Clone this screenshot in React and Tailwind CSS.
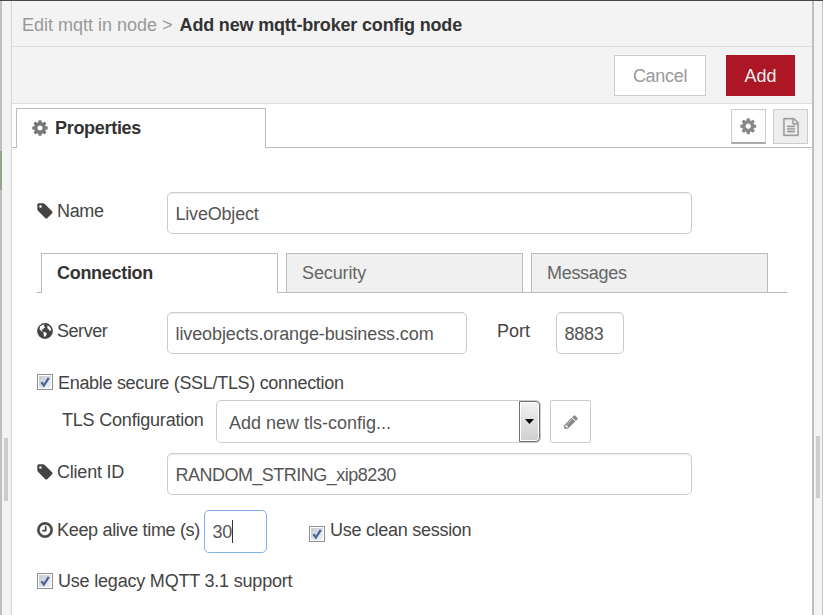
const COG =
  'M1152 896q0-106-75-181t-181-75-181 75-75 181 75 181 181 75 181-75 75-181zm512-109v222q0 12-8 23t-20 13l-185 28q-19 54-39 91 35 50 107 138 10 12 10 25t-9 23q-27 37-99 108t-94 71q-12 0-26-9l-138-108q-44 23-91 38-16 136-29 186-7 28-36 28h-222q-14 0-24.5-8.5t-11.5-21.5l-28-184q-49-16-90-37l-141 107q-10 9-25 9-14 0-25-11-126-114-165-168-7-10-7-23 0-12 8-23 15-21 51-66.5t54-70.5q-27-50-41-99l-183-27q-13-2-21-12.5t-8-23.5v-222q0-12 8-23t19-13l186-28q14-46 39-92-40-57-107-138-10-12-10-24 0-10 9-23 26-36 98.5-107.5t94.5-71.5q13 0 26 10l138 107q44-23 91-38 16-136 29-186 7-28 36-28h222q14 0 24.5 8.5t11.5 21.5l28 184q49 16 90 37l142-107q9-9 24-9 13 0 25 10 129 119 165 170 7 8 7 22 0 12-8 23-15 21-51 66.5t-54 70.5q26 50 41 98l183 28q13 2 21 12.5t8 23.5z';
const TAG =
  'M576 448q0-53-37.5-90.5t-90.5-37.5-90.5 37.5-37.5 90.5 37.5 90.5 90.5 37.5 90.5-37.5 37.5-90.5zm1067 576q0 53-37 90l-491 492q-39 37-91 37-53 0-90-37l-715-716q-38-37-64.5-101t-26.5-117v-416q0-52 38-90t90-38h416q53 0 117 26.5t102 64.5l715 714q37 39 37 91z';
const CLOCK =
  'M1024 544v448q0 14-9 23t-23 9h-320q-14 0-23-9t-9-23v-64q0-14 9-23t23-9h224v-352q0-14 9-23t23-9h64q14 0 23 9t9 23zm416 352q0-148-73-273t-198-198-273-73-273 73-198 198-73 273 73 273 198 198 273 73 273-73 198-198 73-273zm224 0q0 209-103 385.5t-279.5 279.5-385.5 103-385.5-103-279.5-279.5-103-385.5 103-385.5 279.500-279.500 385.5-103 385.5 103 279.5 279.5 103 385.5z';
const PENCIL =
  'M491 1536l91-91-235-235-91 91v107h128v128h107zm523-928q0-22-22-22-10 0-17 7l-542 542q-7 7-7 17 0 22 22 22 10 0 17-7l542-542q7-7 7-17zm-54-192l416 416-832 832h-416v-416zm683 96q0 53-37 90l-166 166-416-416 166-165q36-38 90-38 53 0 91 38l235 234q37 39 37 91z';
const FILE =
  'M1596 380q28 28 48 76t20 88v1152q0 40-28 68t-68 28h-1344q-40 0-68-28t-28-68v-1600q0-40 28-68t68-28h896q40 0 88 20t76 48zm-444-244v376h376q-10-29-22-41l-313-313q-12-12-41-22zm384 1528v-1024h-416q-40 0-68-28t-28-68v-416h-768v1536h1280zm-1024-864q0-14 9-23t23-9h704q14 0 23 9t9 23v64q0 14-9 23t-23 9h-704q-14 0-23-9t-9-23v-64zm736 224q14 0 23 9t9 23v64q0 14-9 23t-23 9h-704q-14 0-23-9t-9-23v-64q0-14 9-23t23-9h704zm0 256q14 0 23 9t9 23v64q0 14-9 23t-23 9h-704q-14 0-23-9t-9-23v-64q0-14 9-23t23-9h704z';

function Icon({ d, className }) {
  return (
    <svg viewBox="0 0 1792 1792" className={'shrink-0 overflow-visible fill-current ' + className}>
      <path d={d} />
    </svg>
  );
}

function Globe({ className }) {
  return (
    <svg viewBox="0 0 16 16" className={'shrink-0 ' + className}>
      <circle cx="8" cy="8" r="7.9" fill="#444" />
      <path d="M3 3.4 5.2 2 7.600 1.600 6.800 3.200 8.200 4.200 6.800 5.600 5.200 6.800 4.200 6.600 5.800 8.400 4.600 8.400 2.600 6.200Z" fill="#fff" />
      <path d="M6.200 8.800 8.400 9.200 10 10.800 9 12.400 7.600 14.200 6.800 12.200Z" fill="#fff" />
      <path d="M10.400 2.600 12.400 3.600 14 5.800 13.600 8.200 12.200 7.600 11.600 6.200 10.400 5.200Z" fill="#fff" />
    </svg>
  );
}

function Checkbox({ className = '' }) {
  return (
    <span className={'block size-4 shrink-0 border border-[#8e8f8f] bg-white p-px ' + className}>
      <svg viewBox="0 0 12 12" className="block size-3 bg-linear-to-br from-[#c4c9d2] to-[#f4f5f6]">
        <path d="M2.400 6.200 4.800 9.600 9.800 1.800" fill="none" stroke="#4a5f97" strokeWidth="2.2" />
      </svg>
    </span>
  );
}

function Field({ className, children }) {
  return (
    <div
      className={
        'flex h-[42px] shrink-0 items-center rounded-[5px] border border-[#ccc] bg-white pt-0.5 pl-[7.500px] text-[#555] shadow-[inset_0_1px_1px_rgba(0,0,0,0.075)] ' +
        className
      }
    >
      {children}
    </div>
  );
}

export default function App() {
  return (
    <div className="flex h-[615px] w-[823px] overflow-hidden border-t border-[#4b4648] bg-[#f3f3f3] font-['Liberation_Sans',Arial,sans-serif] text-[18px] leading-[22px] whitespace-nowrap text-[#444]">
      <div className="w-0.5 shrink-0 bg-[#c0c0c0]">
        <div className="mt-[150px] h-[39px] bg-[#94a58f]" />
      </div>
      <div className="w-[9px] shrink-0 bg-[#f3f3f3] pt-[437px] pl-0.5">
        <div className="h-[63px] w-1 bg-[#ccc]" />
      </div>

      <div className="flex w-[803px] shrink-0 flex-col border-r-2 border-l border-l-[#d6d6d6] border-r-[#bfbfbf] bg-white">
        <div className="flex h-[46px] shrink-0 items-center border-b border-[#ddd] bg-[#f3f3f3] pt-0.5 pl-2.5">
          <span className="text-[#999]">Edit mqtt in node &gt;</span>
          <span className="ml-[7px] font-bold tracking-[-0.18px] text-[#333]">Add new mqtt-broker config node</span>
        </div>

        <div className="flex h-[57px] shrink-0 justify-end border-b border-[#ddd] bg-[#f3f3f3] pt-2 pr-[17px]">
          <div className="flex h-[41px] w-[92px] items-center justify-center border border-[#ccc] bg-white tracking-[-0.3px] text-[#999]">Cancel</div>
          <div className="ml-5 flex h-[41px] w-[69px] items-center justify-center bg-[#ad1625] text-[#eee]">Add</div>
        </div>

        <div className="flex h-11 shrink-0">
          <div className="w-1 border-b border-[#bbb]" />
          <div className="mt-1 flex w-[250px] items-center border-t border-r border-l border-[#bbb] pb-0.5 pl-[14px]">
            <Icon d={COG} className="size-[18px] text-[#777]" />
            <span className="ml-1.5 font-bold tracking-[-0.3px] text-[#333]">Properties</span>
          </div>
          <div className="flex flex-1 justify-end gap-[7px] border-b border-[#bbb] pt-[5px] pr-1">
            <div className="flex h-[35px] w-[35px] items-center justify-center border border-b-2 border-[#ccc] border-b-[#aaa] bg-white">
              <Icon d={COG} className="size-[18.500px] text-[#888]" />
            </div>
            <div className="flex h-[35px] w-[35px] items-center justify-center border border-[#ccc] bg-[#eee]">
              <Icon d={FILE} className="size-[18px] stroke-current stroke-[30] text-[#999]" />
            </div>
          </div>
        </div>

        <div className="flex flex-col pt-11 pl-6">
          <div className="flex h-[42px]">
            <div className="flex h-[38px] w-[131px] items-center">
              <Icon d={TAG} className="size-[18px]" />
              <span className="ml-[3px] tracking-[-0.35px]">Name</span>
            </div>
            <Field className="w-[525px] tracking-[-0.2px]">LiveObject</Field>
          </div>

          <div className="mt-[19px] ml-px flex h-10 w-[750px]">
            <div className="w-1 border-b border-[#bbb]" />
            <div className="w-[237px] border-t border-r border-l border-[#bbb] pt-2 pl-[15px] font-bold tracking-[-0.3px] text-[#333]">Connection</div>
            <div className="w-2 border-b border-[#bbb]" />
            <div className="w-[237px] border border-[#bbb] bg-[#f0f0f0] pt-2 pl-[15px] tracking-[-0.12px] text-[#666]">Security</div>
            <div className="w-2 border-b border-[#bbb]" />
            <div className="w-[237px] border border-[#bbb] bg-[#f0f0f0] pt-2 pl-[15px] tracking-[-0.3px] text-[#666]">Messages</div>
            <div className="flex-1 border-b border-[#bbb]" />
          </div>

          <div className="mt-[19px] flex h-[42px]">
            <div className="flex h-[38px] w-[131px] items-center">
              <Globe className="ml-px size-4" />
              <span className="ml-1 tracking-[-0.45px]">Server</span>
            </div>
            <Field className="w-[300px] tracking-[-0.1px]">liveobjects.orange-business.com</Field>
            <div className="w-[89px] pt-2 pl-[30px]">Port</div>
            <Field className="w-[68px] tracking-[-0.3px]">8883</Field>
          </div>

          <div className="flex h-[46px] items-center pt-3 pl-px">
            <Checkbox className="-mt-0.5" />
            <span className="ml-[5px] tracking-[-0.31px]">Enable secure (SSL/TLS) connection</span>
          </div>

          <div className="flex h-[43px]">
            <div className="w-[180px] pt-[9px] pl-[26px] tracking-[-0.2px]">TLS Configuration</div>
            <div className="flex w-[325px] justify-between rounded-[5px] border border-[#ccc] bg-white">
              <span className="pt-[11px] pl-3 text-[#555]">Add new tls-config...</span>
              <div className="flex w-[21px] items-center justify-center rounded-r-[4px] border border-[#707070] bg-linear-to-b from-[#f2f2f2] to-[#cfcfcf] shadow-[inset_0_0_0_1px_#fff]">
                <svg viewBox="0 0 9 5" className="h-[5px] w-[9px]">
                  <path d="M0 0h9L4.500 5z" fill="#000" />
                </svg>
              </div>
            </div>
            <div className="ml-[9px] flex w-[41px] items-center justify-center rounded-[2px] border border-[#ccc] bg-white">
              <Icon d={PENCIL} className="size-4 text-[#888]" />
            </div>
          </div>

          <div className="mt-2.5 flex h-[42px]">
            <div className="flex h-[38px] w-[131px] items-center">
              <Icon d={TAG} className="size-[18px]" />
              <span className="ml-[3px] tracking-[-0.22px]">Client ID</span>
            </div>
            <Field className="w-[525px] tracking-[-0.52px]">RANDOM_STRING_xip8230</Field>
          </div>

          <div className="mt-[15px] flex h-[43px]">
            <div className="flex h-10 w-[168px] items-center">
              <Icon d={CLOCK} className="size-[18px] stroke-current stroke-[40]" />
              <span className="ml-[3px] tracking-[-0.32px]">Keep alive time (s)</span>
            </div>
            <div className="flex h-[43px] w-[63px] items-center rounded-[5px] border border-[#7fb0ec] bg-white pl-[7.500px] tracking-[-0.3px] text-[#555]">
              30
              <span className="h-[23px] w-px bg-[#333]" />
            </div>
            <Checkbox className="mt-4 ml-[42px]" />
            <span className="mt-[9px] ml-[5px] tracking-[-0.28px]">Use clean session</span>
          </div>

          <div className="mt-[17px] flex h-[22px] items-center pl-px">
            <Checkbox />
            <span className="ml-[5px] tracking-[-0.2px]">Use legacy MQTT 3.1 support</span>
          </div>
        </div>
      </div>

      <div className="w-[9px] shrink-0 border-r border-[#c4c4c4] bg-[#f3f3f3] pt-[435px] pl-0.5">
        <div className="h-[62px] w-1 bg-[#ccc]" />
      </div>
    </div>
  );
}
